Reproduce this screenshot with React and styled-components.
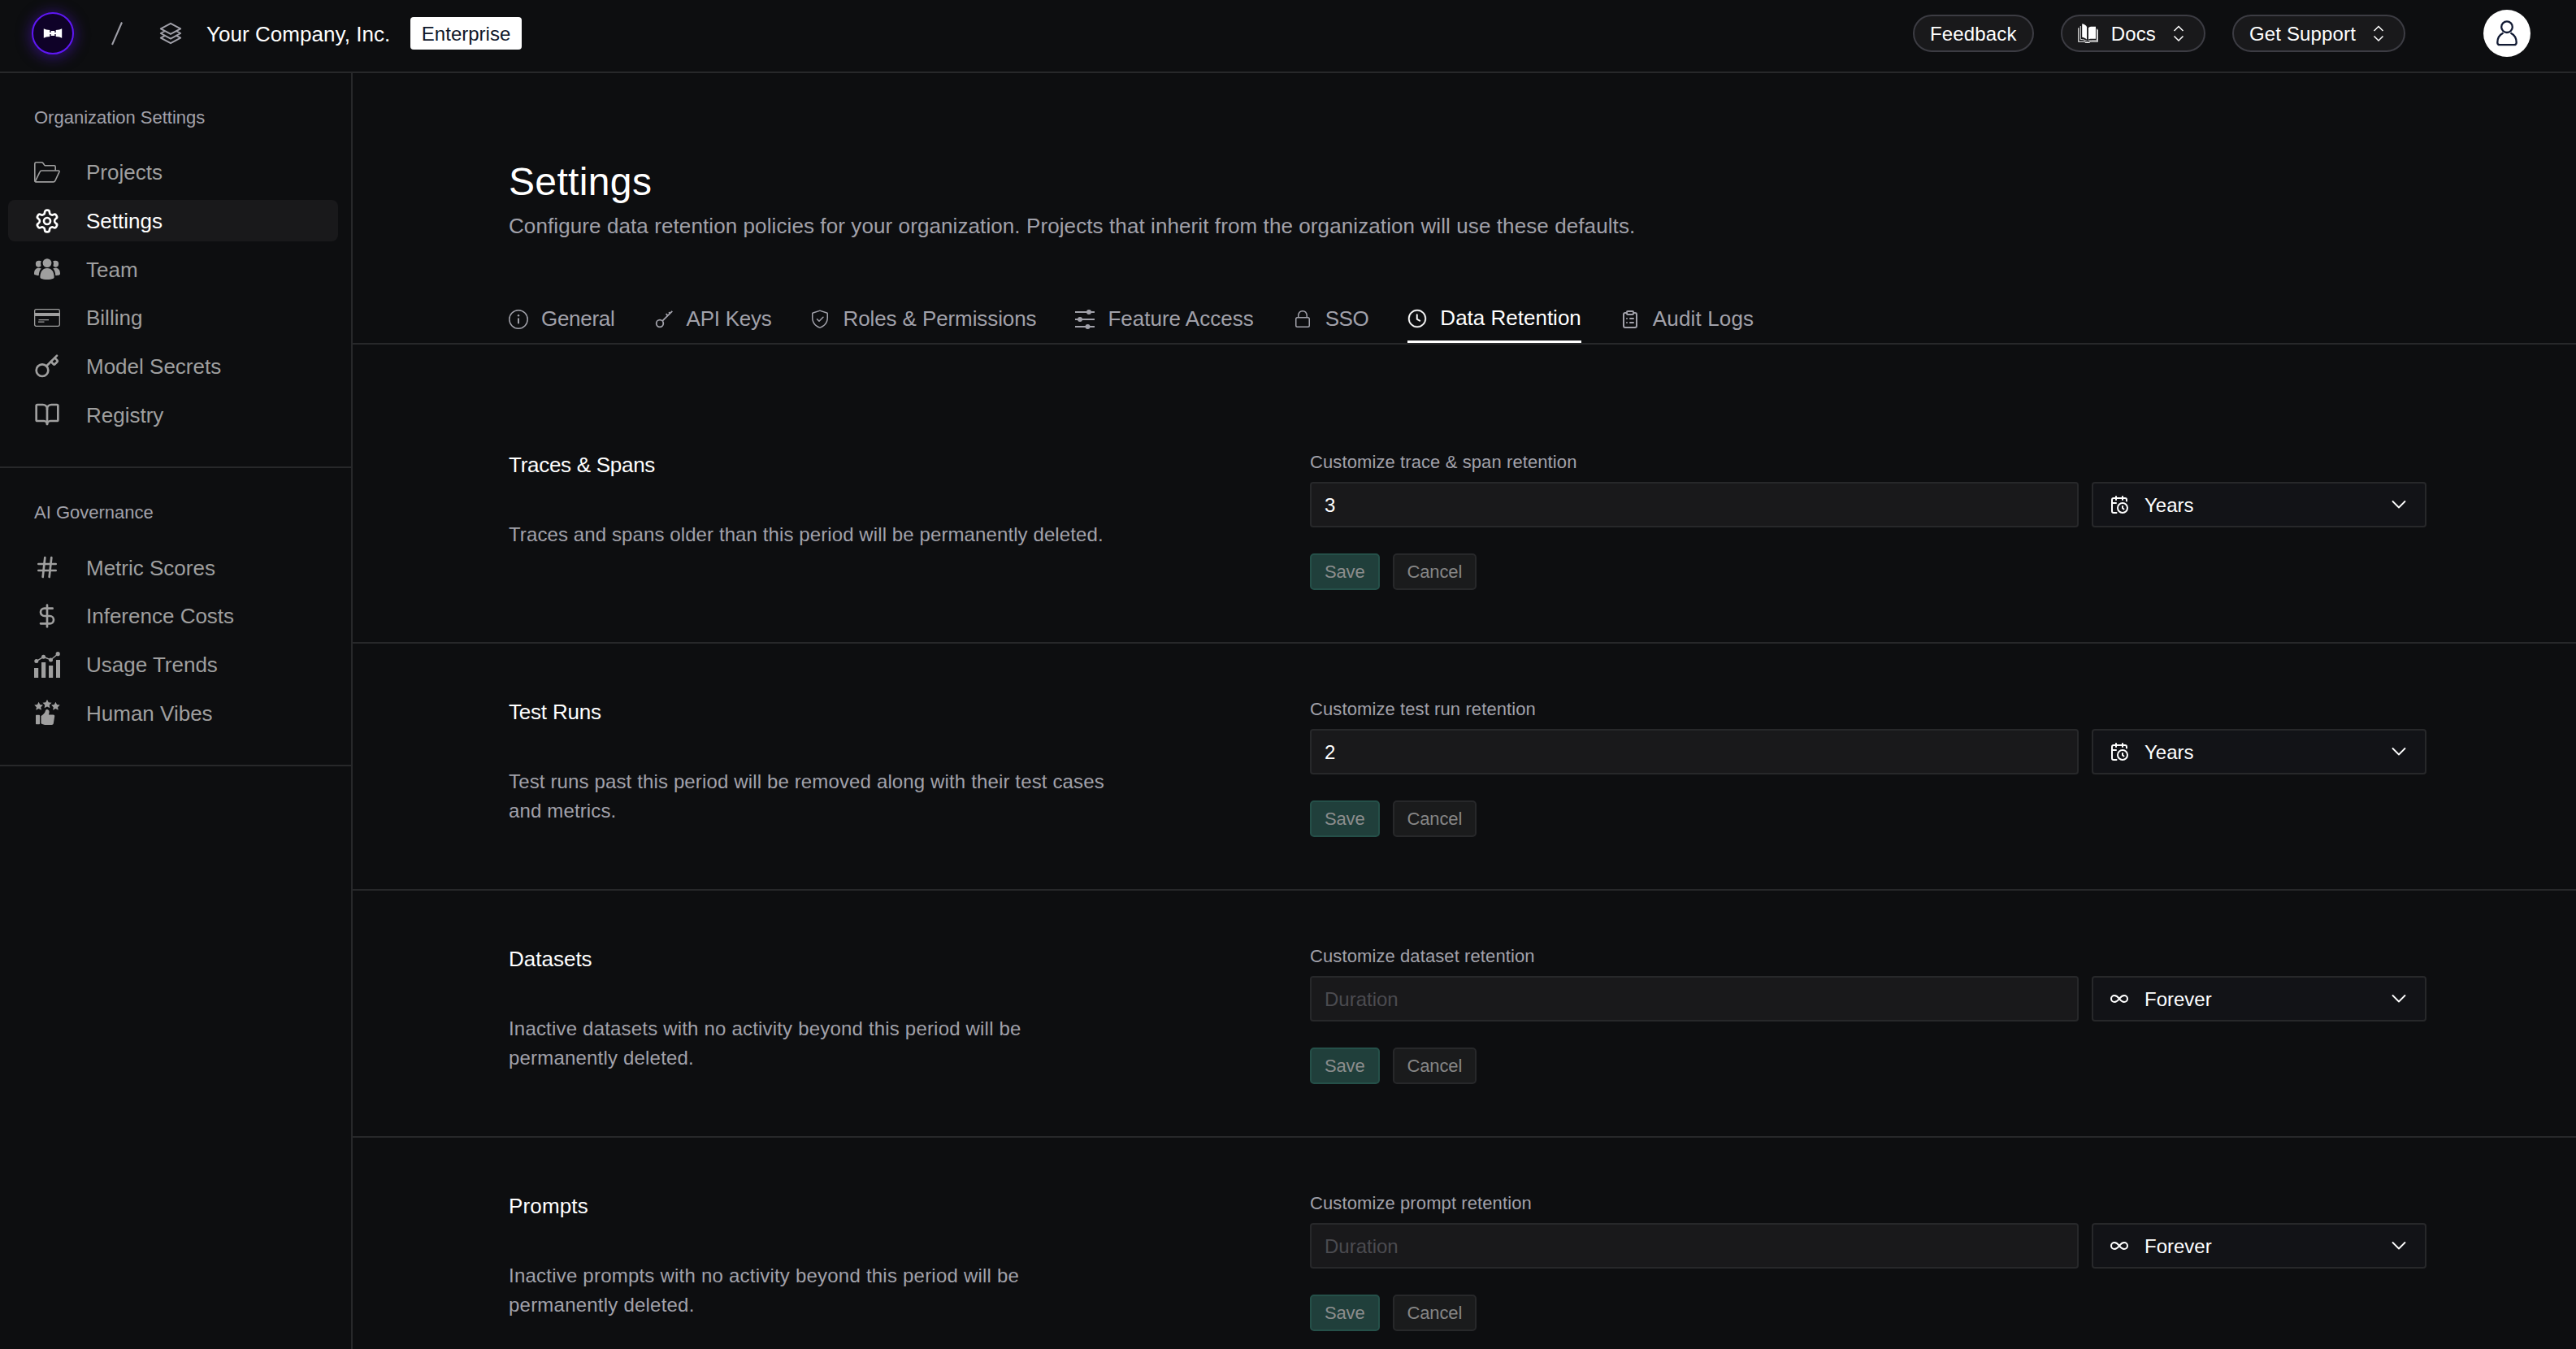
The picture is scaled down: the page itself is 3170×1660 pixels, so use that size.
import React from "react";
import styled, { createGlobalStyle } from "styled-components";
import {
  LuSettings,
  LuKey,
  LuBookOpen,
  LuHash,
  LuDollarSign,
  LuClipboardList,
  LuCalendarClock,
  LuInfinity,
} from "react-icons/lu";
import { GoShieldCheck, GoLock, GoClock } from "react-icons/go";
import { HiOutlineSquare3Stack3D } from "react-icons/hi2";

const FolderIcon = () => (
  <svg width="32" height="26" viewBox="0 0 32 26" fill="none" stroke="currentColor" strokeWidth="1.6" strokeLinejoin="round">
    <path d="M1.4 24.6C.9 24.2.8 23.8.8 23V2.8q0-2 2-2h6.4q1 0 1.6.8l2 2.6q.5.6 1.4.6h10.4q1.6 0 1.6 1.6v4.4" />
    <path d="M1.4 24.2 7 12.6q.7-1.6 2.3-1.6h20.6q1.6 0 1 1.6l-5 10.8q-.7 1.5-2.3 1.5H2.8q-1.6 0-1.4-.7z" />
  </svg>
);

const TeamIcon = () => (
  <svg width="32" height="26" viewBox="0 0 32 26" fill="currentColor">
    <circle cx="16" cy="5.6" r="5.4" />
    <path d="M16 12c5.4 0 8.6 4.2 8.6 11 0 .8-.3 1.3-1 1.7-2 .9-4.6 1.2-7.6 1.2s-5.6-.3-7.6-1.2c-.7-.4-1-.9-1-1.7C7.4 16.2 10.6 12 16 12z" />
    <path d="M8.7 3.3a7.8 7.8 0 0 0-.2 5.9 6.5 6.5 0 0 1-2.6 1.6A4 4 0 0 1 5.8 2.8c1.1-.1 2.1.1 2.9.5z" />
    <path d="M23.3 3.3a7.8 7.8 0 0 1 .2 5.9 6.5 6.5 0 0 0 2.6 1.6 4 4 0 0 0 .1-8c-1.1-.1-2.1.1-2.9.5z" />
    <path d="M5.6 11.8c1.3 0 2.3.2 3.2.7-1.9 1.9-2.9 4.8-3.1 8.5-2 0-3.6-.2-4.8-.8-.6-.3-.9-.8-.9-1.5 0-4.2 2.1-6.9 5.6-6.9z" />
    <path d="M26.4 11.8c-1.3 0-2.3.2-3.2.7 1.9 1.9 2.9 4.8 3.1 8.5 2 0 3.6-.2 4.8-.8.6-.3.9-.8.9-1.5 0-4.2-2.1-6.9-5.6-6.9z" />
  </svg>
);

const CardIcon = () => (
  <svg width="32" height="22" viewBox="0 0 32 22" fill="none" stroke="currentColor" strokeWidth="1.3">
    <rect x=".65" y=".65" width="30.7" height="20.7" rx="1.8" />
    <path d="M0 7h32" strokeWidth="4" />
    <path d="M5.5 13.6h12.5M5 16.2h7.5" strokeWidth="1.2" />
  </svg>
);

const TrendIcon = () => (
  <svg width="32" height="32" viewBox="0 0 32 32" fill="currentColor">
    <path d="M0 20h5.2v12H0zM9 13h5.2v19H9zM18 17h5.2v15H18zM27 10h5v22h-5z" />
    <circle cx="2.8" cy="11.6" r="2.5" />
    <circle cx="11.5" cy="6.3" r="2.5" />
    <circle cx="20.5" cy="10" r="2.5" />
    <circle cx="29.2" cy="2.7" r="2.6" />
    <path d="M2.8 11.6 11.5 6.3 20.5 10l8.7-7.3" fill="none" stroke="currentColor" strokeWidth="1.5" />
  </svg>
);

const star = (cx, cy, r) =>
  Array.from({ length: 10 }, (_, i) => {
    const a = (Math.PI / 5) * i - Math.PI / 2;
    const d = i % 2 ? r * 0.5 : r;
    return `${(cx + d * Math.cos(a)).toFixed(2)},${(cy + d * Math.sin(a)).toFixed(2)}`;
  }).join(" ");

const VibesIcon = () => (
  <svg width="32" height="32" viewBox="0 0 32 32" fill="currentColor">
    <polygon points={star(5.6, 8.3, 5.6)} />
    <polygon points={star(16, 5.6, 5.8)} />
    <polygon points={star(26.4, 8.3, 5.6)} />
    <rect x="2" y="18.8" width="5" height="11.4" rx=".6" />
    <path d="M8.5 20c2.8-1.6 4.6-3.5 5.4-6.3.4-1.5 1.3-2 2.5-1.6 2.5.8 2.7 3.3 1.5 6.4h5.6c1.2 0 1.9.9 1.7 2.1l-1.3 8.2c-.2 1.4-1 2.2-2.4 2.3h-6.6c-2.6 0-4.5-.6-6.4-1.8z" />
  </svg>
);

const InfoIcon = () => (
  <svg width="24" height="24" viewBox="0 0 24 24" fill="none" stroke="currentColor" strokeWidth="1.5">
    <circle cx="12" cy="12" r="11.2" />
    <path d="M12 10.4v6.8" strokeWidth="2" />
    <circle cx="12" cy="7.3" r="1.2" fill="currentColor" stroke="none" />
  </svg>
);

const ApiKeyIcon = () => (
  <svg width="24" height="24" viewBox="0 0 24 24" fill="none" stroke="currentColor" strokeWidth="1.8">
    <circle cx="7" cy="17" r="4.3" />
    <path d="M10.2 13.8 22.3 1.9M16.8 7.4l-2.2-2.2M19.6 4.6l-1.5-1.5" />
  </svg>
);

const SlidersIcon = () => (
  <svg width="24" height="24" viewBox="0 0 24 24" fill="currentColor">
    <path d="M0 3h24M0 12h24M0 21h24" stroke="currentColor" strokeWidth="1.8" />
    <circle cx="17" cy="3" r="3" />
    <circle cx="6" cy="12" r="3" />
    <circle cx="15.5" cy="21" r="3" />
  </svg>
);

const DocsIcon = () => (
  <svg width="25" height="25" viewBox="0 0 25 25" fill="currentColor">
    <path d="M5.2.2c3 .6 5 2 5.9 4v15.5c-1.2-1.5-3.1-2.5-5.9-3z" />
    <path d="M13 5.3q1-1.5 3-1.6h6v15.1h-6.5q-1.6 0-2.5 1z" />
    <path d="M3.3 3v16.5c3.3 0 5.7.8 8.2 2.5 1.8-1 3-1.2 5-1.2h7V6.5" fill="none" stroke="currentColor" strokeWidth=".9" />
    <path d="M.8 5.3v16.9h7.5l1.5 1.3h4l1.5-1.3h8.9V7.5" fill="none" stroke="currentColor" strokeWidth="1.1" />
  </svg>
);

const SortIcon = () => (
  <svg width="24" height="24" viewBox="0 0 24 24" fill="none" stroke="currentColor" strokeWidth="1.5">
    <path d="M6.5 9 12 3.5 17.5 9M6.5 15.5 12 21l5.5-5.5" />
  </svg>
);

const ChevronIcon = () => (
  <svg width="24" height="24" viewBox="0 0 24 24" fill="none" stroke="currentColor" strokeWidth="1.8" strokeLinecap="round" strokeLinejoin="round">
    <path d="m4.5 8 7.5 7.5L19.5 8" />
  </svg>
);

const UserIcon = () => (
  <svg width="28" height="32" viewBox="0 0 28 32" fill="none" stroke="currentColor" strokeWidth="2.3">
    <circle cx="14" cy="8.2" r="6.8" />
    <path d="M9.5 15.4C5 17.7 2.3 22.3 2.3 27.2c0 1.9 1 3 2.9 3h17.6c1.9 0 2.9-1.1 2.9-3 0-4.9-2.7-9.5-7.2-11.8" />
  </svg>
);

const BowTie = () => (
  <svg width="24" height="12" viewBox="0 0 24 12" fill="#fff">
    <path d="M.8.3 4 1.6 8.3 2v8l-4.300.4-3.200 1.300zM23.200.3 20 1.600l-4.300.4v8l4.300.4 3.200 1.300zM9.700 3h4.600v6H9.700z" />
    <path d="M8 5h8v2H8z" />
  </svg>
);

const Slash = () => (
  <svg width="20" height="30" viewBox="0 0 20 30" fill="none" stroke="#a1a1aa" strokeWidth="2">
    <path d="M4 29 16 1.5" />
  </svg>
);

const orgLinks = [
  { label: "Projects", icon: <FolderIcon /> },
  { label: "Settings", icon: <LuSettings size={32} />, active: true },
  { label: "Team", icon: <TeamIcon /> },
  { label: "Billing", icon: <CardIcon /> },
  { label: "Model Secrets", icon: <LuKey size={32} /> },
  { label: "Registry", icon: <LuBookOpen size={32} /> },
];

const governanceLinks = [
  { label: "Metric Scores", icon: <LuHash size={32} /> },
  { label: "Inference Costs", icon: <LuDollarSign size={32} /> },
  { label: "Usage Trends", icon: <TrendIcon /> },
  { label: "Human Vibes", icon: <VibesIcon /> },
];

const tabs = [
  { label: "General", icon: <InfoIcon />, tracking: "-0.28px" },
  { label: "API Keys", icon: <ApiKeyIcon />, tracking: "-0.25px" },
  { label: "Roles & Permissions", icon: <GoShieldCheck size={24} />, tracking: "-0.1px" },
  { label: "Feature Access", icon: <SlidersIcon /> },
  { label: "SSO", icon: <GoLock size={24} />, tracking: "-0.4px" },
  { label: "Data Retention", icon: <GoClock size={24} strokeWidth={0.4} />, active: true },
  { label: "Audit Logs", icon: <LuClipboardList size={24} />, tracking: "0.15px" },
];

const policies = [
  {
    title: "Traces & Spans",
    text: "Traces and spans older than this period will be permanently deleted.",
    label: "Customize trace & span retention",
    value: "3",
    unit: "Years",
    tracking: "-0.28px",
    textTracking: "0.1px",
  },
  {
    title: "Test Runs",
    text: "Test runs past this period will be removed along with their test cases and metrics.",
    label: "Customize test run retention",
    value: "2",
    unit: "Years",
    tracking: "-0.2px",
    textTracking: "0.14px",
  },
  {
    title: "Datasets",
    text: "Inactive datasets with no activity beyond this period will be permanently deleted.",
    label: "Customize dataset retention",
    value: "",
    unit: "Forever",
    textTracking: "0.19px",
  },
  {
    title: "Prompts",
    text: "Inactive prompts with no activity beyond this period will be permanently deleted.",
    label: "Customize prompt retention",
    value: "",
    unit: "Forever",
    tracking: "0.15px",
    textTracking: "0.22px",
  },
];

const NavGroup = ({ title, links }) => (
  <Group>
    <GroupTitle>{title}</GroupTitle>
    <NavList>
      {links.map((el) => (
        <NavItem key={el.label} $active={el.active}>
          <IconBox>{el.icon}</IconBox>
          <span>{el.label}</span>
        </NavItem>
      ))}
    </NavList>
  </Group>
);

const Policy = ({ policy }) => (
  <PolicyRow>
    <div>
      <PolicyTitle $tracking={policy.tracking}>{policy.title}</PolicyTitle>
      <PolicyText $tracking={policy.textTracking}>{policy.text}</PolicyText>
    </div>
    <PolicyForm>
      <label>{policy.label}</label>
      <Fields>
        <Input defaultValue={policy.value} placeholder="Duration" />
        <Select>
          {policy.unit === "Years" ? <LuCalendarClock size={24} /> : <LuInfinity size={24} />}
          <span>{policy.unit}</span>
          <ChevronIcon />
        </Select>
      </Fields>
      <Actions>
        <Button $primary>Save</Button>
        <Button>Cancel</Button>
      </Actions>
    </PolicyForm>
  </PolicyRow>
);

export default function App() {
  return (
    <Page>
      <GlobalStyle />
      <Header>
        <Logo>
          <BowTie />
        </Logo>
        <Crumbs>
          <Slash />
          <HiOutlineSquare3Stack3D size={30} />
          <Company>Your Company, Inc.</Company>
          <Plan>Enterprise</Plan>
        </Crumbs>
        <HeaderActions>
          <Pill>
            <span>Feedback</span>
          </Pill>
          <Pill>
            <DocsIcon />
            <span>Docs</span>
            <SortIcon />
          </Pill>
          <Pill>
            <span>Get Support</span>
            <SortIcon />
          </Pill>
        </HeaderActions>
        <Avatar>
          <UserIcon />
        </Avatar>
      </Header>
      <Body>
        <Sidebar>
          <NavGroup title="Organization Settings" links={orgLinks} />
          <NavGroup title="AI Governance" links={governanceLinks} />
        </Sidebar>
        <Main>
          <Intro>
            <h1>Settings</h1>
            <p>
              Configure data retention policies for your organization. Projects that inherit from the
              organization will use these defaults.
            </p>
          </Intro>
          <Tabs>
            {tabs.map((el) => (
              <Tab key={el.label} $active={el.active} $tracking={el.tracking}>
                {el.icon}
                <span>{el.label}</span>
              </Tab>
            ))}
          </Tabs>
          <Policies>
            {policies.map((el) => (
              <Policy key={el.title} policy={el} />
            ))}
          </Policies>
        </Main>
      </Body>
    </Page>
  );
}

const GlobalStyle = createGlobalStyle`
  * {
    box-sizing: border-box;
  }
  body {
    margin: 0;
    background-color: #0d0e10;
    overflow: hidden;
  }
  h1, h2, p {
    margin: 0;
    font-weight: 400;
  }
  svg {
    flex-shrink: 0;
  }
`;
const Page = styled.div`
  display: flex;
  flex-direction: column;
  height: 1660px;
  overflow: hidden;
  font-family: "Liberation Sans", Arial, sans-serif;
  font-size: 26px;
  color: #fff;
  background-color: #0d0e10;
`;
const Header = styled.header`
  display: flex;
  align-items: center;
  flex-shrink: 0;
  height: 90px;
  padding: 0 56px 6px 39px;
  border-bottom: 2px solid #27282a;
`;
const Logo = styled.div`
  display: flex;
  align-items: center;
  justify-content: center;
  width: 52px;
  height: 52px;
  border: 2px solid #5f17f5;
  border-radius: 50%;
  background-color: #0f0228;
  box-shadow: 0 2px 16px 3px #4a14b880;
`;
const Crumbs = styled.div`
  display: flex;
  align-items: center;
  margin-left: 43px;
  color: #a1a1aa;
  & > svg + svg {
    margin-left: 41px;
  }
`;
const Company = styled.span`
  margin-left: 29px;
  padding-top: 2px;
  color: #fff;
  letter-spacing: 0.05px;
`;
const Plan = styled.span`
  height: 40px;
  margin-left: 25px;
  padding: 1px 13.5px 0;
  border-radius: 4px;
  background-color: #fff;
  color: #0f172a;
  font-size: 24px;
  line-height: 40px;
`;
const HeaderActions = styled.div`
  display: flex;
  gap: 33px;
  margin-left: auto;
`;
const Pill = styled.div`
  display: flex;
  align-items: center;
  gap: 16px;
  height: 46px;
  padding: 0 19px;
  border: 2px solid #3c3c43;
  border-radius: 23px;
  background-color: #19191b;
  font-size: 24px;
  letter-spacing: 0.15px;
  & > span {
    padding-top: 1px;
  }
`;
const Avatar = styled.div`
  display: flex;
  align-items: center;
  justify-content: center;
  width: 58px;
  height: 58px;
  margin-left: 96px;
  border-radius: 50%;
  background-color: #fff;
  color: #111a33;
`;
const Body = styled.div`
  display: flex;
  flex: 1;
  min-height: 0;
`;
const Sidebar = styled.nav`
  flex-shrink: 0;
  width: 434px;
  border-right: 2px solid #27282a;
`;
const Group = styled.div`
  padding: 39px 16px 38.3px 10px;
  border-bottom: 2px solid #27282a;
`;
const GroupTitle = styled.div`
  padding-left: 32px;
  margin-bottom: 25px;
  font-size: 22px;
  line-height: 32px;
  color: #a1a1aa;
`;
const NavList = styled.div`
  display: flex;
  flex-direction: column;
  gap: 8px;
`;
const NavItem = styled.div`
  display: flex;
  align-items: center;
  gap: 32px;
  height: 51.7px;
  padding: 0 32px;
  border-radius: 8px;
  color: ${(props) => (props.$active ? "#fff" : "#9f9f9f")};
  background-color: ${(props) => (props.$active ? "#19191b" : "transparent")};
  & > span {
    padding-top: 2px;
  }
`;
const IconBox = styled.div`
  display: flex;
  align-items: center;
  justify-content: center;
  width: 32px;
  height: 32px;
`;
const Main = styled.main`
  flex: 1;
  padding-top: 105px;
`;
const Intro = styled.div`
  padding-left: 192px;
  h1 {
    font-size: 48px;
    line-height: 58px;
    letter-spacing: 0.35px;
  }
  p {
    margin-top: 7px;
    line-height: 36px;
    letter-spacing: 0.095px;
    color: #a1a1aa;
  }
`;
const Tabs = styled.div`
  display: flex;
  gap: 48px;
  margin-top: 78px;
  padding-left: 192px;
  border-bottom: 2px solid #27282a;
`;
const Tab = styled.div`
  display: flex;
  align-items: center;
  gap: 16px;
  height: 48px;
  padding-bottom: ${(props) => (props.$active ? "10px" : "11px")};
  border-bottom: ${(props) => (props.$active ? "3px solid #fff" : "0")};
  color: ${(props) => (props.$active ? "#fff" : "#a1a1aa")};
  letter-spacing: ${(props) => props.$tracking || "normal"};
`;
const Policies = styled.div`
  padding-top: 64px;
`;
const PolicyRow = styled.section`
  display: grid;
  grid-template-columns: 986px 1374px;
  height: 304px;
  padding: 64px 0 0 192px;
  border-bottom: 2px solid #27282a;
`;
const PolicyTitle = styled.h2`
  font-size: 26px;
  line-height: 40px;
  letter-spacing: ${(props) => props.$tracking || "normal"};
`;
const PolicyText = styled.p`
  width: 756px;
  margin-top: 48px;
  font-size: 24px;
  line-height: 36px;
  letter-spacing: ${(props) => props.$tracking || "normal"};
  color: #a1a1aa;
`;
const PolicyForm = styled.div`
  label {
    display: block;
    font-size: 22px;
    line-height: 33px;
    letter-spacing: 0.1px;
    color: #a1a1aa;
  }
`;
const Fields = styled.div`
  display: flex;
  gap: 16px;
  margin-top: 8px;
`;
const Input = styled.input`
  flex: 1;
  height: 56px;
  padding: 2px 16px 0;
  border: 2px solid #27282a;
  border-radius: 4px;
  background-color: #19191b;
  color: #fff;
  font-family: inherit;
  font-size: 24px;
  &::placeholder {
    color: #4b4b50;
  }
`;
const Select = styled.div`
  display: flex;
  align-items: center;
  width: 412px;
  height: 56px;
  padding: 0 20px;
  border: 2px solid #27282a;
  border-radius: 4px;
  background-color: #121317;
  font-size: 24px;
  & > span {
    flex: 1;
    margin-left: 19px;
    padding-top: 2px;
  }
`;
const Actions = styled.div`
  display: flex;
  gap: 16px;
  margin-top: 32px;
`;
const Button = styled.button`
  height: 45px;
  padding: 0 16px;
  border: 2px solid ${(props) => (props.$primary ? "#255049" : "#27282a")};
  border-radius: 5px;
  background-color: ${(props) => (props.$primary ? "#203f3b" : "#1a1b1c")};
  color: ${(props) => (props.$primary ? "#8b8d8d" : "#868686")};
  font-family: inherit;
  font-size: 22px;
  letter-spacing: -0.15px;
`;
